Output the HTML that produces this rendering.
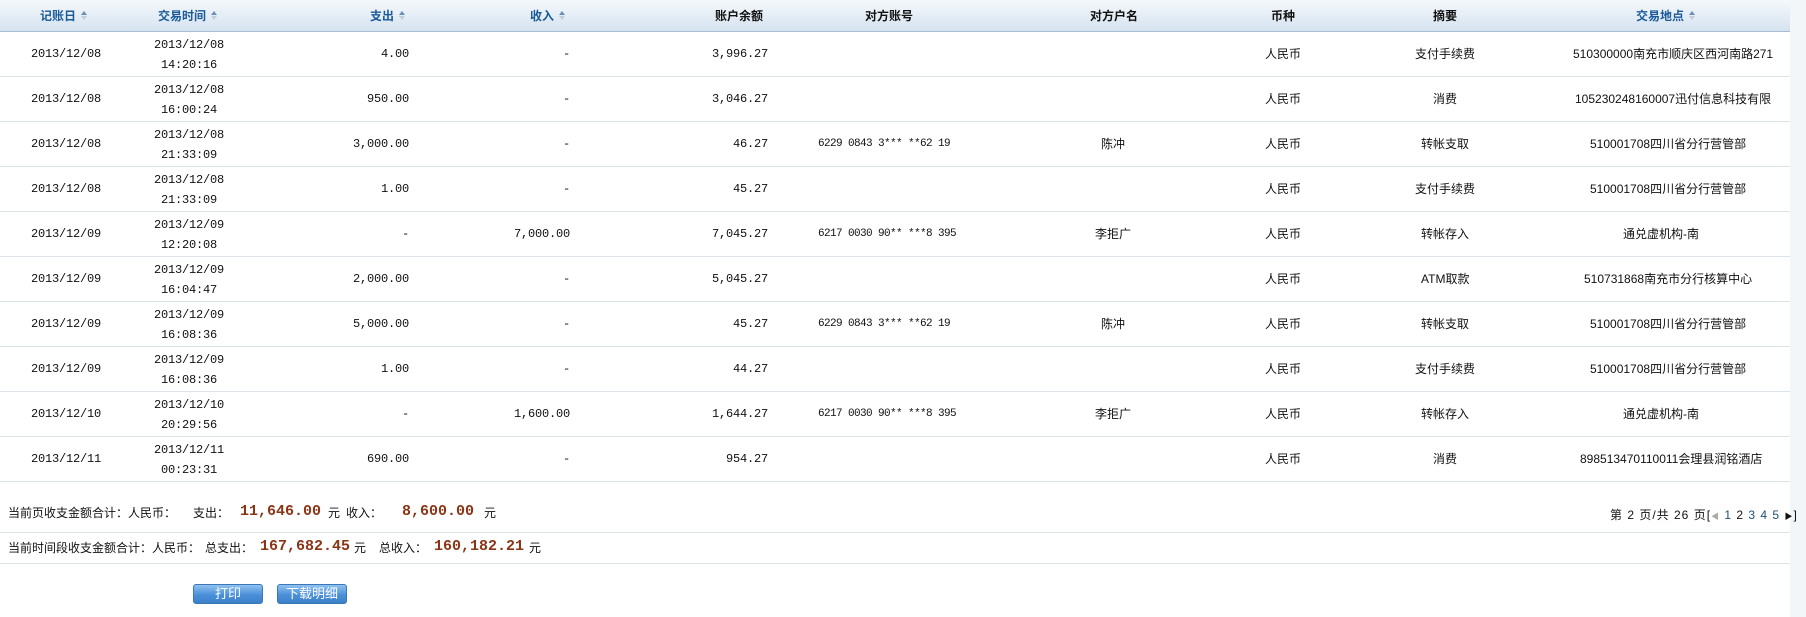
<!DOCTYPE html>
<html><head><meta charset="utf-8">
<style>
*{margin:0;padding:0;box-sizing:border-box}
body{width:1806px;height:617px;background:#fff;position:relative;overflow:hidden;font-family:"Liberation Sans","Noto Sans CJK SC",sans-serif;font-size:12px;color:#111}
.hd{position:absolute;left:0;top:0;width:1790px;height:32px;background:linear-gradient(#f5f8fc,#d5e3f0);border-bottom:1px solid #a7bdd3}
.hd span{position:absolute;top:8px;font-weight:bold;white-space:nowrap;line-height:16px}
.s{color:#1b5a99}
.ar{display:inline-block;width:7px;height:10px;position:relative;margin-left:5px;vertical-align:-1px}
.ar:before{content:"";position:absolute;left:0;top:0;border-left:3.5px solid transparent;border-right:3.5px solid transparent;border-bottom:4px solid #6a8fb5}
.ar:after{content:"";position:absolute;left:0;top:5px;border-left:3.5px solid transparent;border-right:3.5px solid transparent;border-top:4px solid #c4cdd6}
.row{position:absolute;left:0;width:1790px;height:45px;border-bottom:1px solid #dbe2e8}
.row span{position:absolute;white-space:nowrap;line-height:20px}
.m{font-family:"Liberation Mono",monospace;letter-spacing:-0.2px}
.a{font-family:"Liberation Mono",monospace;font-size:11px;letter-spacing:-0.6px}
.sb{position:absolute;left:1790px;top:0;width:16px;height:617px;background:#f3f6f9}
.ln{position:absolute;left:0;width:1790px;height:1px;background:#dbe2e8}
.t{position:absolute;white-space:nowrap;line-height:18px}
.red{font-family:"Liberation Mono",monospace;font-weight:bold;font-size:15px;color:#8a3416}
.btn{position:absolute;top:584px;height:20px;border:1px solid #3a78b8;border-radius:3px;background:linear-gradient(#8fc2f0,#4a90d8 55%,#3c80c8);color:#fff;text-align:center;line-height:18px;font-size:13px}
</style></head><body>
<div class="hd">
<span class="s" style="left:40px">记账日<i class="ar"></i></span>
<span class="s" style="left:158px">交易时间<i class="ar"></i></span>
<span class="s" style="left:370px">支出<i class="ar"></i></span>
<span class="s" style="left:530px">收入<i class="ar"></i></span>
<span style="left:715px">账户余额</span>
<span style="left:865px">对方账号</span>
<span style="left:1090px">对方户名</span>
<span style="left:1271px">币种</span>
<span style="left:1433px">摘要</span>
<span class="s" style="left:1636px">交易地点<i class="ar"></i></span>
</div>
<div class="sb"></div>
<div class="row" style="top:32px"><span class="m" style="left:31px;top:12px">2013/12/08</span><span class="m" style="left:154px;top:3px">2013/12/08<br>&nbsp;14:20:16</span><span class="m" style="right:1381px;top:12px">4.00</span><span class="m" style="right:1220px;top:12px">-</span><span class="m" style="right:1022px;top:12px">3,996.27</span><span style="left:1265px;top:12px">人民币</span><span style="left:1415px;top:12px">支付手续费</span><span style="left:1573px;top:12px">510300000南充市顺庆区西河南路271</span></div>
<div class="row" style="top:77px"><span class="m" style="left:31px;top:12px">2013/12/08</span><span class="m" style="left:154px;top:3px">2013/12/08<br>&nbsp;16:00:24</span><span class="m" style="right:1381px;top:12px">950.00</span><span class="m" style="right:1220px;top:12px">-</span><span class="m" style="right:1022px;top:12px">3,046.27</span><span style="left:1265px;top:12px">人民币</span><span style="left:1433px;top:12px">消费</span><span style="left:1575px;top:12px">105230248160007迅付信息科技有限</span></div>
<div class="row" style="top:122px"><span class="m" style="left:31px;top:12px">2013/12/08</span><span class="m" style="left:154px;top:3px">2013/12/08<br>&nbsp;21:33:09</span><span class="m" style="right:1381px;top:12px">3,000.00</span><span class="m" style="right:1220px;top:12px">-</span><span class="m" style="right:1022px;top:12px">46.27</span><span class="a" style="left:818px;top:12px">6229 0843 3*** **62 19</span><span style="left:1101px;top:12px">陈冲</span><span style="left:1265px;top:12px">人民币</span><span style="left:1421px;top:12px">转帐支取</span><span style="left:1590px;top:12px">510001708四川省分行营管部</span></div>
<div class="row" style="top:167px"><span class="m" style="left:31px;top:12px">2013/12/08</span><span class="m" style="left:154px;top:3px">2013/12/08<br>&nbsp;21:33:09</span><span class="m" style="right:1381px;top:12px">1.00</span><span class="m" style="right:1220px;top:12px">-</span><span class="m" style="right:1022px;top:12px">45.27</span><span style="left:1265px;top:12px">人民币</span><span style="left:1415px;top:12px">支付手续费</span><span style="left:1590px;top:12px">510001708四川省分行营管部</span></div>
<div class="row" style="top:212px"><span class="m" style="left:31px;top:12px">2013/12/09</span><span class="m" style="left:154px;top:3px">2013/12/09<br>&nbsp;12:20:08</span><span class="m" style="right:1381px;top:12px">-</span><span class="m" style="right:1220px;top:12px">7,000.00</span><span class="m" style="right:1022px;top:12px">7,045.27</span><span class="a" style="left:818px;top:12px">6217 0030 90** ***8 395</span><span style="left:1095px;top:12px">李拒广</span><span style="left:1265px;top:12px">人民币</span><span style="left:1421px;top:12px">转帐存入</span><span style="left:1623px;top:12px">通兑虚机构-南</span></div>
<div class="row" style="top:257px"><span class="m" style="left:31px;top:12px">2013/12/09</span><span class="m" style="left:154px;top:3px">2013/12/09<br>&nbsp;16:04:47</span><span class="m" style="right:1381px;top:12px">2,000.00</span><span class="m" style="right:1220px;top:12px">-</span><span class="m" style="right:1022px;top:12px">5,045.27</span><span style="left:1265px;top:12px">人民币</span><span style="left:1421px;top:12px">ATM取款</span><span style="left:1584px;top:12px">510731868南充市分行核算中心</span></div>
<div class="row" style="top:302px"><span class="m" style="left:31px;top:12px">2013/12/09</span><span class="m" style="left:154px;top:3px">2013/12/09<br>&nbsp;16:08:36</span><span class="m" style="right:1381px;top:12px">5,000.00</span><span class="m" style="right:1220px;top:12px">-</span><span class="m" style="right:1022px;top:12px">45.27</span><span class="a" style="left:818px;top:12px">6229 0843 3*** **62 19</span><span style="left:1101px;top:12px">陈冲</span><span style="left:1265px;top:12px">人民币</span><span style="left:1421px;top:12px">转帐支取</span><span style="left:1590px;top:12px">510001708四川省分行营管部</span></div>
<div class="row" style="top:347px"><span class="m" style="left:31px;top:12px">2013/12/09</span><span class="m" style="left:154px;top:3px">2013/12/09<br>&nbsp;16:08:36</span><span class="m" style="right:1381px;top:12px">1.00</span><span class="m" style="right:1220px;top:12px">-</span><span class="m" style="right:1022px;top:12px">44.27</span><span style="left:1265px;top:12px">人民币</span><span style="left:1415px;top:12px">支付手续费</span><span style="left:1590px;top:12px">510001708四川省分行营管部</span></div>
<div class="row" style="top:392px"><span class="m" style="left:31px;top:12px">2013/12/10</span><span class="m" style="left:154px;top:3px">2013/12/10<br>&nbsp;20:29:56</span><span class="m" style="right:1381px;top:12px">-</span><span class="m" style="right:1220px;top:12px">1,600.00</span><span class="m" style="right:1022px;top:12px">1,644.27</span><span class="a" style="left:818px;top:12px">6217 0030 90** ***8 395</span><span style="left:1095px;top:12px">李拒广</span><span style="left:1265px;top:12px">人民币</span><span style="left:1421px;top:12px">转帐存入</span><span style="left:1623px;top:12px">通兑虚机构-南</span></div>
<div class="row" style="top:437px"><span class="m" style="left:31px;top:12px">2013/12/11</span><span class="m" style="left:154px;top:3px">2013/12/11<br>&nbsp;00:23:31</span><span class="m" style="right:1381px;top:12px">690.00</span><span class="m" style="right:1220px;top:12px">-</span><span class="m" style="right:1022px;top:12px">954.27</span><span style="left:1265px;top:12px">人民币</span><span style="left:1433px;top:12px">消费</span><span style="left:1580px;top:12px">898513470110011会理县润铭酒店</span></div>

<span class="t" style="left:8px;top:504px">当前页收支金额合计：人民币：</span>
<span class="t" style="left:193px;top:504px">支出：</span>
<span class="t red" style="left:240px;top:503px">11,646.00</span>
<span class="t" style="left:328px;top:504px">元</span>
<span class="t" style="left:346px;top:504px">收入：</span>
<span class="t red" style="left:402px;top:503px">8,600.00</span>
<span class="t" style="left:484px;top:504px">元</span>
<span class="t" style="left:1610px;top:506px;letter-spacing:1px">第 2 页/共 26 页[<span style="color:#aaa;font-size:8px">◀</span> <span style="color:#1b4f7a">1</span> 2 <span style="color:#1b4f7a">3 4 5</span> <span style="font-size:8px">▶</span>]</span>
<div class="ln" style="top:532px"></div>
<span class="t" style="left:8px;top:539px">当前时间段收支金额合计：人民币：</span>
<span class="t" style="left:205px;top:539px">总支出：</span>
<span class="t red" style="left:260px;top:538px">167,682.45</span>
<span class="t" style="left:354px;top:539px">元</span>
<span class="t" style="left:379px;top:539px">总收入：</span>
<span class="t red" style="left:434px;top:538px">160,182.21</span>
<span class="t" style="left:529px;top:539px">元</span>
<div class="ln" style="top:563px"></div>
<div class="btn" style="left:193px;width:70px">打印</div>
<div class="btn" style="left:277px;width:70px">下载明细</div>
</body></html>
